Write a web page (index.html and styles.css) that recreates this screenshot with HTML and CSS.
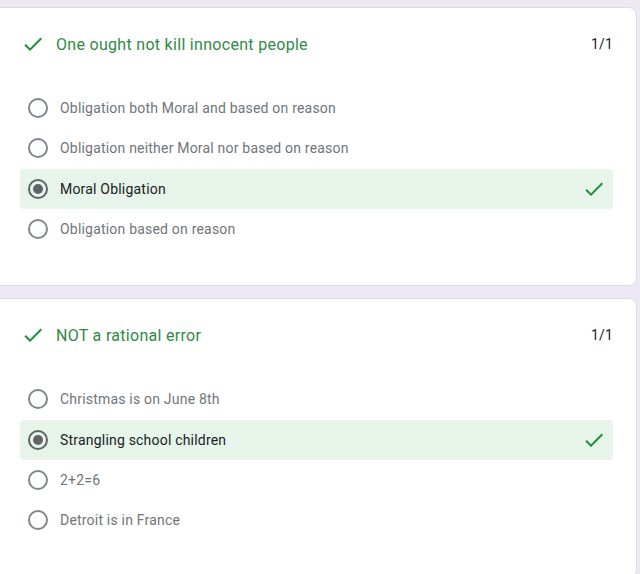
FILE: index.html
```html
<!DOCTYPE html>
<html>
<head>
<meta charset="utf-8">
<link rel="stylesheet" href="styles.css">
</head>
<body>
<div class="card">
  <div class="header">
    <svg class="hcheck" viewBox="0 0 24 24" width="24" height="24"><path d="M9 16.2 4.8 12l-1.4 1.4L9 19 21 7l-1.4-1.4z" fill="#1e8e3e"/></svg>
    <span class="title">One ought not kill innocent people</span>
    <span class="score">1/1</span>
  </div>
  <div class="options">
    <div class="opt"><span class="radio"></span><span class="label">Obligation both Moral and based on reason</span></div>
    <div class="opt"><span class="radio"></span><span class="label">Obligation neither Moral nor based on reason</span></div>
    <div class="opt sel"><span class="radio on"></span><span class="label">Moral Obligation</span>
      <svg class="ocheck" viewBox="0 0 24 24" width="24" height="24"><path d="M9 16.2 4.8 12l-1.4 1.4L9 19 21 7l-1.4-1.4z" fill="#1e8e3e"/></svg></div>
    <div class="opt"><span class="radio"></span><span class="label">Obligation based on reason</span></div>
  </div>
</div>
<div class="card">
  <div class="header">
    <svg class="hcheck" viewBox="0 0 24 24" width="24" height="24"><path d="M9 16.2 4.8 12l-1.4 1.4L9 19 21 7l-1.4-1.4z" fill="#1e8e3e"/></svg>
    <span class="title">NOT a rational error</span>
    <span class="score">1/1</span>
  </div>
  <div class="options">
    <div class="opt"><span class="radio"></span><span class="label">Christmas is on June 8th</span></div>
    <div class="opt sel"><span class="radio on"></span><span class="label">Strangling school children</span>
      <svg class="ocheck" viewBox="0 0 24 24" width="24" height="24"><path d="M9 16.2 4.8 12l-1.4 1.4L9 19 21 7l-1.4-1.4z" fill="#1e8e3e"/></svg></div>
    <div class="opt"><span class="radio"></span><span class="label">2+2=6</span></div>
    <div class="opt"><span class="radio"></span><span class="label">Detroit is in France</span></div>
  </div>
</div>
</body>
</html>
```
FILE: styles.css
```css
html, body {
  margin: 0;
  padding: 0;
}
body {
  background: #ece9f5;
  font-family: Roboto, "Liberation Sans", sans-serif;
  padding-top: 7px;
  overflow: hidden;
}
.card {
  margin-left: -8px;
  width: 643px;
  background: #fff;
  border: 1px solid #dadce0;
  border-radius: 8px;
  padding: 24px 0 36px 0;
  margin-bottom: 12px;
}
.header {
  display: flex;
  align-items: center;
  height: 24px;
  padding-left: 28px;
  padding-right: 23px;
}
.hcheck {
  width: 24px;
  height: 24px;
  margin-right: 11px;
}
.title {
  flex: 1;
  color: #2f8a46;
  font-size: 16px;
  letter-spacing: 0.3px;
}
.score {
  color: #202124;
  font-size: 14px;
  letter-spacing: 0.2px;
}
.options {
  margin-top: 32px;
  padding-left: 27px;
  padding-right: 23px;
}
.opt {
  display: flex;
  align-items: center;
  height: 40.33px;
  padding-left: 8px;
  padding-right: 7px;
  border-radius: 4px;
}
.opt.sel {
  background: #e6f4ea;
}
.radio {
  box-sizing: border-box;
  width: 20px;
  height: 20px;
  border: 2px solid #80868b;
  border-radius: 50%;
  margin-right: 12px;
  display: flex;
  align-items: center;
  justify-content: center;
}
.radio.on {
  border-color: #5f6368;
}
.radio.on::after {
  content: "";
  width: 10px;
  height: 10px;
  border-radius: 50%;
  background: #5f6368;
}
.label {
  flex: 1;
  font-size: 14px;
  color: #70757a;
  letter-spacing: 0.2px;
}
.opt.sel .label {
  color: #202124;
}
.ocheck {
  width: 24px;
  height: 24px;
}
```
